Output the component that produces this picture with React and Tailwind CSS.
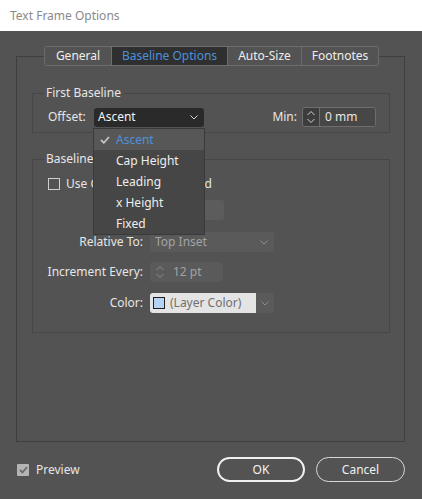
import { useState } from "react"

const Chevron = ({ color = "#cfcfcf" }) => (
  <svg width="8" height="5" viewBox="0 0 8 5" fill="none">
    <path d="M0.5 0.5 L4 4 L7.5 0.5" stroke={color} strokeWidth="1" />
  </svg>
)

const SpinArrows = ({ color = "#d0d0d0" }) => (
  <svg width="10" height="16" viewBox="0 0 10 16" fill="none">
    <path d="M1.5 6 L5 2.5 L8.5 6" stroke={color} strokeWidth="1" />
    <path d="M1.5 10 L5 13.5 L8.5 10" stroke={color} strokeWidth="1" />
  </svg>
)

// right-aligned label column of the baseline grid rows
const RowLabel = ({ children, className = "" }) => (
  <div className="w-[95px] flex justify-end">
    <span className={`whitespace-nowrap ${className}`}>{children}</span>
  </div>
)

const tabs = [
  { label: "General", w: "w-[66px]" },
  { label: "Baseline Options", w: "w-[116px]" },
  { label: "Auto-Size", w: "w-[74px]" },
  { label: "Footnotes", w: "w-[77px]" },
]

const offsetItems = ["Ascent", "Cap Height", "Leading", "x Height", "Fixed"]

export default function App() {
  const [activeTab] = useState("Baseline Options")
  const [offset] = useState("Ascent")

  return (
    <div className="relative w-[422px] h-[499px] overflow-hidden bg-[#535353] flex flex-col font-['Noto_Sans',sans-serif] text-[12px] leading-[16px] text-[#e6e6e6]">
      {/* window title */}
      <div className="h-[31px] bg-white flex items-center pl-[10px] text-[#8a8a8a]">Text Frame Options</div>

      <div className="flex-1 pl-[16px] pr-[17px] pt-[15px]">
        <fieldset className="h-[396px] p-0 m-0 border border-[#3f3f3f]">
          <legend className="ml-[27px] p-0 flex border border-[#6c6c6c] rounded-[3px] h-[20px] overflow-hidden">
            {tabs.map((t, i) => (
              <div
                key={t.label}
                className={`${t.w} flex items-center justify-center ${i > 0 ? "border-l border-[#6c6c6c]" : ""} ${
                  t.label === activeTab ? "bg-[#2f2f2f] text-[#4d91d8]" : "text-[#eeeeee]"
                }`}
              >
                {t.label}
              </div>
            ))}
          </legend>

          <div className="pl-[15px] pr-[14px]">
            {/* First Baseline */}
            <fieldset className="mt-[19px] p-0 border border-[#464646]">
              <legend className="ml-[11px] px-[2px] leading-[16px]">First Baseline</legend>
              <div className="mt-[6px] pb-[5px] pl-[15px] pr-[13px] flex items-center h-[25px]">
                <span className="w-[46px]">Offset:</span>
                <div className="w-[110px] h-[19px] bg-[#2a2a2a] rounded-[3px] flex items-center pl-[4px] pr-[6px]">
                  <span className="flex-1 text-[#f2f2f2]">{offset}</span>
                  <Chevron />
                </div>
                <span className="ml-auto mr-[5px]">Min:</span>
                <div className="w-[74px] h-[20px] border border-[#6e6e6e] rounded-[3px] flex overflow-hidden">
                  <div className="w-[17px] bg-[#3d3d3d] flex items-center justify-center border-r border-[#6e6e6e]">
                    <SpinArrows />
                  </div>
                  <div className="flex-1 bg-[#474747] flex items-center pl-[5px]">0 mm</div>
                </div>
              </div>
            </fieldset>

            {/* Baseline Grid */}
            <fieldset className="mt-[18px] p-0 border border-[#464646]">
              <legend className="ml-[11px] px-[2px] leading-[16px]">Baseline Grid</legend>
              <div className="pl-[15px] pb-[19px]">
                <div className="mt-[9px] h-[16px] flex items-center">
                  <span className="w-[12px] h-[12px] border border-[#cfcfcf]" />
                  <span className="ml-[6px]">Use Custom Baseline Grid</span>
                </div>

                <div className="mt-[8px] h-[20px] flex items-center">
                  <RowLabel className="text-[#a8a8a8]">Start:</RowLabel>
                  <div className="ml-[7px] w-[74px] h-[20px] bg-[#5c5c5c] rounded-[3px]" />
                </div>

                <div className="mt-[12px] h-[20px] flex items-center">
                  <RowLabel>Relative To:</RowLabel>
                  <div className="ml-[7px] w-[124px] h-[20px] bg-[#5a5a5a] rounded-[3px] flex items-center pl-[5px] pr-[6px]">
                    <span className="flex-1 text-[#a3a3a3]">Top Inset</span>
                    <Chevron color="#8e8e8e" />
                  </div>
                </div>

                <div className="mt-[10px] h-[20px] flex items-center">
                  <RowLabel>Increment Every:</RowLabel>
                  <div className="ml-[7px] w-[73px] h-[20px] bg-[#5a5a5a] rounded-[3px] flex items-center pl-[5px]">
                    <SpinArrows color="#8e8e8e" />
                    <span className="ml-[8px] text-[#a3a3a3]">12 pt</span>
                  </div>
                </div>

                <div className="mt-[11px] h-[20px] flex items-center">
                  <RowLabel>Color:</RowLabel>
                  <div className="ml-[7px] w-[124px] h-[20px] bg-[#5a5a5a] rounded-[3px] flex items-center overflow-hidden">
                    <div className="w-[106px] h-[20px] bg-[#e4e4e4] flex items-center pl-[3px]">
                      <span className="w-[12px] h-[12px] bg-[#b6d3f6] border border-[#1e1e1e]" />
                      <span className="ml-[5px] text-[#707070]">(Layer Color)</span>
                    </div>
                    <div className="flex-1 flex items-center justify-center">
                      <Chevron color="#8e8e8e" />
                    </div>
                  </div>
                </div>
              </div>
            </fieldset>
          </div>
        </fieldset>

        <div className="mt-[15px] flex items-center">
          <span className="ml-[1px] w-[12px] h-[12px] rounded-[1px] bg-[#b4b4b4] flex items-center justify-center">
            <svg width="9" height="8" viewBox="0 0 9 8" fill="none">
              <path d="M1 4 L3.5 6.5 L8 1" stroke="#6a6a6a" strokeWidth="1.8" />
            </svg>
          </span>
          <span className="ml-[7px]">Preview</span>
          <button className="ml-auto w-[88px] h-[25px] rounded-full border-2 border-[#f0f0f0] text-[#f4f4f4] text-[12px]">
            OK
          </button>
          <button className="ml-[11px] w-[89px] h-[25px] rounded-full border border-[#d8d8d8] text-[#f0f0f0] text-[12px]">
            Cancel
          </button>
        </div>
      </div>

      {/* open Offset menu */}
      <div className="absolute left-[93px] top-[128px] w-[112px] h-[107px] bg-[#464646] border border-[#3a3a3a]">
        {offsetItems.map((item) => (
          <div
            key={item}
            className={`h-[21px] flex items-center ${item === offset ? "bg-[#575757] text-[#4d91d8]" : "text-[#eeeeee]"}`}
          >
            <span className="w-[22px] flex justify-center">
              {item === offset && (
                <svg width="10" height="8" viewBox="0 0 10 8" fill="none">
                  <path d="M1 4 L3.8 6.8 L9 1" stroke="#c4c4c4" strokeWidth="1.8" />
                </svg>
              )}
            </span>
            {item}
          </div>
        ))}
      </div>
    </div>
  )
}
